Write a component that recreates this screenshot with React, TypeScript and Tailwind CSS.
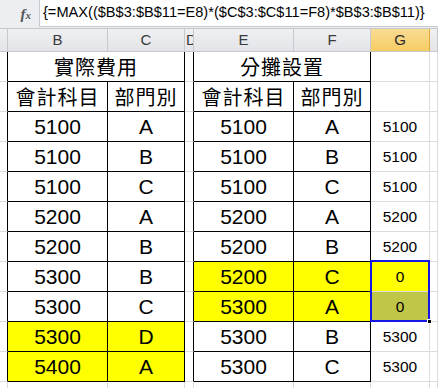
import { type FC } from 'react';

type Row = {
  b: string;
  c: string;
  e: string;
  f: string;
  g: string;
  leftYellow?: boolean;
  rightYellow?: boolean;
};

const ROWS: Row[] = [
  { b: '5100', c: 'A', e: '5100', f: 'A', g: '5100' },
  { b: '5100', c: 'B', e: '5100', f: 'B', g: '5100' },
  { b: '5100', c: 'C', e: '5100', f: 'C', g: '5100' },
  { b: '5200', c: 'A', e: '5200', f: 'A', g: '5200' },
  { b: '5200', c: 'B', e: '5200', f: 'B', g: '5200' },
  { b: '5300', c: 'B', e: '5200', f: 'C', g: '0', rightYellow: true },
  { b: '5300', c: 'C', e: '5300', f: 'A', g: '0', rightYellow: true },
  { b: '5300', c: 'D', e: '5300', f: 'B', g: '5300', leftYellow: true },
  { b: '5400', c: 'A', e: '5300', f: 'C', g: '5300', leftYellow: true },
];

const FORMULA = '{=MAX(($B$3:$B$11=E8)*($C$3:$C$11=F8)*$B$3:$B$11)}';

const cell = 'flex items-center justify-center overflow-hidden border-r border-b';
const big = "text-[21px] text-black font-['Liberation_Sans',Arial,sans-serif]";
const cjk = "text-[20px] text-black font-['Noto_Sans_CJK_TC','Noto_Sans_CJK_SC',sans-serif] tracking-[1px]";
const small = "text-[15.5px] text-black font-['Liberation_Sans',Arial,sans-serif]";

const ColHead: FC<{ label: string; active?: boolean; clip?: boolean }> = ({ label, active, clip }) => (
  <div
    className={`flex items-center overflow-hidden border-r text-[15px]
      font-['Liberation_Sans',Arial,sans-serif] ${clip ? 'justify-start pl-[1px]' : 'justify-center'} ${
        active
          ? 'bg-gradient-to-b from-[#f9dc93] to-[#f6cd62] border-[#e2a63f] text-[#2a2a2a]'
          : 'bg-gradient-to-b from-[#eef0f2] to-[#e2e4e7] border-[#c5c8cc] text-[#3a3a3a]'
      }`}
  >
    {label}
  </div>
);

const App: FC = () => {
  return (
    <div className="w-[438px] h-[388px] overflow-hidden bg-white relative select-none">
      {/* formula bar */}
      <div className="flex h-[28px] bg-[#eceef1]">
        <div className="w-[39px] flex items-start justify-end pr-[8px] pt-[3px]">
          <span className="font-['Liberation_Serif',serif] italic font-bold text-[15px] text-[#555]">
            f<span className="text-[11px]">x</span>
          </span>
        </div>
        <div className="flex-1 h-[27px] bg-white border-l border-b border-[#c6c9cd] flex items-center pl-[3px] whitespace-nowrap overflow-hidden">
          <span className="text-[14.6px] text-black font-['Liberation_Sans',Arial,sans-serif]">
            {FORMULA}
          </span>
        </div>
      </div>

      {/* column headers */}
      <div className="grid grid-cols-[8px_100px_77px_9px_100px_77px_59px_1fr] h-[24px] border-t border-b border-[#c5c8cc]">
        <ColHead label="" />
        <ColHead label="B" />
        <ColHead label="C" />
        <ColHead label="D" clip />
        <ColHead label="E" />
        <ColHead label="F" />
        <ColHead label="G" active />
        <ColHead label="" />
      </div>

      {/* sheet */}
      <div className="grid grid-cols-[8px_100px_77px_9px_100px_77px_59px_1fr] auto-rows-[30px]">
        {/* title row */}
        <div className={`${cell} border-r-black border-b-[#dadcdd]`} />
        <div className={`${cell} col-span-2 border-r-black border-b-black ${cjk}`}>實際費用</div>
        <div className={`${cell} border-r-black border-b-[#dadcdd]`} />
        <div className={`${cell} col-span-2 border-r-black border-b-black ${cjk}`}>分攤設置</div>
        <div className={`${cell} border-[#dadcdd]`} />
        <div className={`${cell} border-[#dadcdd]`} />

        {/* header row */}
        <div className={`${cell} border-r-black border-b-[#dadcdd]`} />
        <div className={`${cell} border-black ${cjk}`}>會計科目</div>
        <div className={`${cell} border-black ${cjk}`}>部門別</div>
        <div className={`${cell} border-r-black border-b-[#dadcdd]`} />
        <div className={`${cell} border-black ${cjk}`}>會計科目</div>
        <div className={`${cell} border-black ${cjk}`}>部門別</div>
        <div className={`${cell} border-[#dadcdd]`} />
        <div className={`${cell} border-[#dadcdd]`} />

        {ROWS.map((row, i) => {
          const lFill = row.leftYellow ? 'bg-[#ffff00]' : '';
          const rFill = row.rightYellow ? 'bg-[#ffff00]' : '';
          const gFill = i === 5 ? 'bg-[#ffff00]' : i === 6 ? 'bg-[#c0c648]' : '';
          return (
            <div key={i} className="contents">
              <div className={`${cell} border-r-black border-b-[#dadcdd]`} />
              <div className={`${cell} border-black ${big} ${lFill}`}>{row.b}</div>
              <div className={`${cell} border-black ${big} ${lFill}`}>{row.c}</div>
              <div className={`${cell} border-r-black border-b-[#dadcdd]`} />
              <div className={`${cell} border-black ${big} ${rFill}`}>{row.e}</div>
              <div className={`${cell} border-black ${big} ${rFill}`}>{row.f}</div>
              <div className={`${cell} border-[#dadcdd] ${small} ${gFill}`}>{row.g}</div>
              <div className={`${cell} border-[#dadcdd]`} />
            </div>
          );
        })}

        {/* partial row below */}
        <div className={`${cell} border-[#dadcdd]`} />
        <div className={`${cell} border-[#dadcdd]`} />
        <div className={`${cell} border-[#dadcdd]`} />
        <div className={`${cell} border-[#dadcdd]`} />
        <div className={`${cell} border-[#dadcdd]`} />
        <div className={`${cell} border-[#dadcdd]`} />
        <div className={`${cell} border-[#dadcdd]`} />
        <div className={`${cell} border-[#dadcdd]`} />
      </div>

      {/* selection overlay */}
      <div className="absolute left-[370px] top-[260px] w-[60px] h-[62px] border-2 border-[#1515e6] pointer-events-none">
        <div className="absolute -right-[4px] -bottom-[4px] w-[5px] h-[5px] bg-black border border-white" />
      </div>
    </div>
  );
};

export default App;
